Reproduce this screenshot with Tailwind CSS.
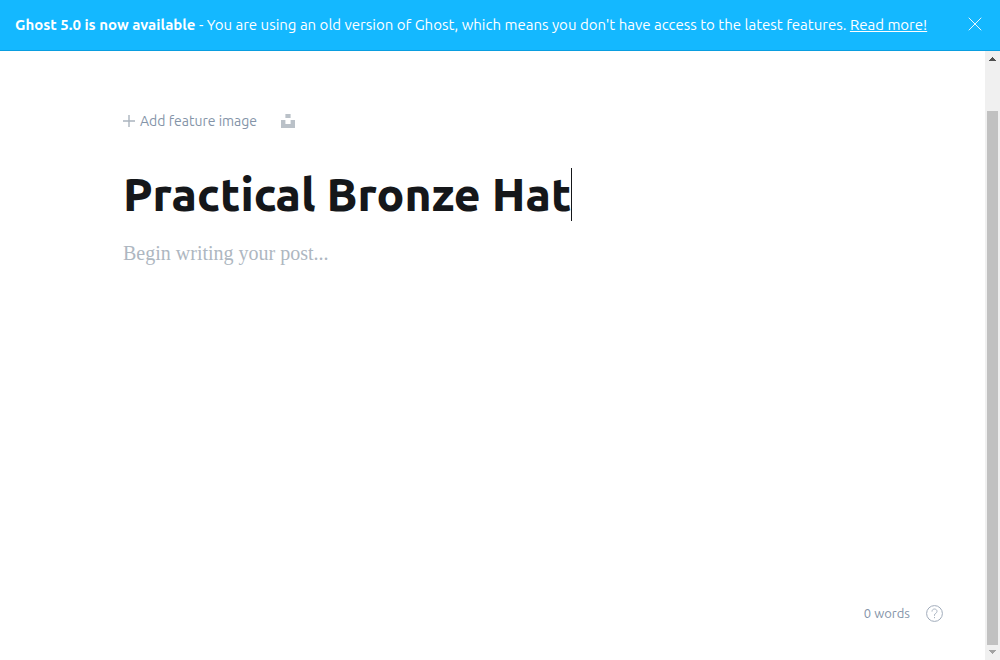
<!DOCTYPE html>
<html lang="en">
<head>
<meta charset="utf-8">
<meta name="viewport" content="width=device-width, initial-scale=1">
<title>Practical Bronze Hat</title>
<script src="https://cdn.jsdelivr.net/npm/@tailwindcss/browser@4"></script>
</head>
<body class="flex h-screen flex-col overflow-hidden bg-white font-['Ubuntu','Noto_Sans',sans-serif] text-[#15171a]">
  <aside class="flex h-[51px] shrink-0 items-center justify-between border-b border-[#0a9ee0] bg-[#14b8ff] pr-[18px] pl-[15px] text-[15px] text-white">
    <p class="whitespace-nowrap"><strong class="font-bold">Ghost 5.0 is now available</strong> - You are using an old version of Ghost, which means you don't have access to the latest features. <a href="#" class="underline">Read more!</a></p>
    <button type="button" aria-label="Close" class="mb-[2px] shrink-0">
      <svg class="block size-[14px]" viewBox="0 0 14 14" fill="none" stroke="currentColor" stroke-width="0.9" stroke-linecap="round"><path d="M1 1l12 12M13 1L1 13"/></svg>
    </button>
  </aside>
  <div class="flex min-h-0 grow">
    <main class="flex min-w-0 grow flex-col">
      <section class="grow px-[123px] pt-[60px]">
        <div class="flex h-5 items-center gap-6 text-sm text-[#8494a8]">
          <button type="button" class="flex items-center gap-[5px]">
            <svg class="size-3 text-[#abb4be]" viewBox="0 0 12 12" fill="none" stroke="currentColor" stroke-width="1.4"><path d="M6 0v12M0 6h12"/></svg>
            Add feature image
          </button>
          <button type="button" aria-label="Unsplash" class="text-[#bac1c8]">
            <svg class="block size-[14px]" viewBox="0 0 14 14" fill="currentColor"><path d="M4.4 0h5.2v4H4.4zM0 6h4.4v4h5.2V6H14v8H0z"/></svg>
          </button>
        </div>
        <div class="mt-9 flex h-[55px] items-center">
          <input aria-label="Post title" value="Practical Bronze Hat" class="field-sizing-content bg-transparent text-[46px] leading-[55px] font-extrabold outline-none">
          <span class="h-[53px] w-px bg-[#15171a]"></span>
        </div>
        <textarea aria-label="Post content" placeholder="Begin writing your post..." class="mt-[15px] block h-[120px] w-full resize-none font-['Liberation_Serif',serif] text-xl leading-8 outline-none placeholder:text-[#aeb7c1]"></textarea>
      </section>
      <footer class="flex items-center justify-end gap-4 px-[42px] pb-[37px] text-[13px] leading-5 text-[#8494a8]">
        <span>0 words</span>
        <a href="#" aria-label="Help" class="text-[#a0abba]">
          <svg class="block size-[17px]" viewBox="0 0 17 17" fill="none" stroke="currentColor"><circle cx="8.5" cy="8.5" r="7.9"/><path d="M6 6.6C6 5 7.1 4 8.5 4S11 5 11 6.4c0 1.9-2.5 1.9-2.5 3.6v.8M8.5 12v1.2" stroke-width="0.9"/></svg>
        </a>
      </footer>
    </main>
    <div aria-hidden="true" class="flex w-[15px] shrink-0 flex-col bg-[#f0f0f0]">
      <svg class="h-[15px] w-[15px] shrink-0" viewBox="0 0 15 15" fill="#505050" shape-rendering="crispEdges"><path d="M7 6h1v1h1v1h1v1h1v1H4V9h1V8h1V7h1z"/></svg>
      <div class="mx-[2px] mt-[45px] grow bg-[#c1c1c1]"></div>
      <svg class="h-[15px] w-[15px] shrink-0" viewBox="0 0 15 15" fill="#a3a3a3" shape-rendering="crispEdges"><path d="M4 5h7v1h-1v1H9v1H8v1H7V8H6V7H5V6H4z"/></svg>
    </div>
  </div>
</body>
</html>
